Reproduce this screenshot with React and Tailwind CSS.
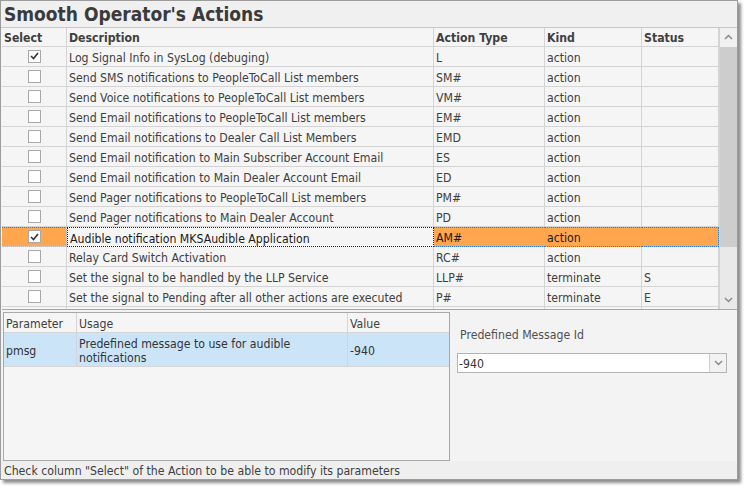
import React from 'react';

const rows = [
  { sel: true, desc: 'Log Signal Info in SysLog (debuging)', type: 'L', kind: 'action', status: '' },
  { sel: false, desc: 'Send SMS notifications to PeopleToCall List members', type: 'SM#', kind: 'action', status: '' },
  { sel: false, desc: 'Send Voice notifications to PeopleToCall List members', type: 'VM#', kind: 'action', status: '' },
  { sel: false, desc: 'Send Email notifications to PeopleToCall List members', type: 'EM#', kind: 'action', status: '' },
  { sel: false, desc: 'Send Email notifications to Dealer Call List Members', type: 'EMD', kind: 'action', status: '' },
  { sel: false, desc: 'Send Email notification to Main Subscriber Account Email', type: 'ES', kind: 'action', status: '' },
  { sel: false, desc: 'Send Email notification to Main Dealer Account Email', type: 'ED', kind: 'action', status: '' },
  { sel: false, desc: 'Send Pager notifications to PeopleToCall List members', type: 'PM#', kind: 'action', status: '' },
  { sel: false, desc: 'Send Pager notifications to Main Dealer Account', type: 'PD', kind: 'action', status: '' },
  { sel: true, desc: 'Audible notification MKSAudible Application', type: 'AM#', kind: 'action', status: '', active: true },
  { sel: false, desc: 'Relay Card Switch Activation', type: 'RC#', kind: 'action', status: '' },
  { sel: false, desc: 'Set the signal to be handled by the LLP Service', type: 'LLP#', kind: 'terminate', status: 'S' },
  { sel: false, desc: 'Set the signal to Pending after all other actions are executed', type: 'P#', kind: 'terminate', status: 'E' },
];

const font = { fontFamily: '"DejaVu Sans Condensed", "DejaVu Sans", Tahoma, sans-serif' };

const CheckBox = ({ checked }) => (
  <div className="w-[13px] h-[13px] border border-[#a8a8a8] bg-white flex items-center justify-center">
    {checked && (
      <svg width="9" height="8" viewBox="0 0 9 8">
        <path d="M1 4 L3.5 6.5 L8 1" fill="none" stroke="#333" strokeWidth="1.6" />
      </svg>
    )}
  </div>
);

const Chevron = ({ up }) => (
  <svg width="9" height="6" viewBox="0 0 9 6">
    <path d={up ? 'M1 5 L4.5 1.5 L8 5' : 'M1 1 L4.5 4.5 L8 1'} fill="none" stroke="#8a8a8a" strokeWidth="1.5" />
  </svg>
);

const cols = 'grid grid-cols-[65px_367px_111px_97px_77px]';

export default function App() {
  return (
    <div className="w-[748px] h-[490px] bg-white text-[12.2px] text-[#404040]" style={font}>
      <div className="w-[738px] h-[480px] border border-[#9c9c9c] bg-[#f3f3f3] shadow-[3px_3px_3px_rgba(0,0,0,0.45)] flex flex-col">
        {/* title */}
        <div className="h-[27px] px-[3px] pt-[2px] flex items-center bg-[#f0f0f0] border-b border-[#c8c8c8] text-[19px] font-bold text-[#3a3a3a] leading-none">
          Smooth Operator's Actions
        </div>

        {/* actions grid */}
        <div className="h-[283px] ml-px flex border-b border-[#a8a8a8] bg-[#f5f5f5] overflow-hidden">
          <div className="w-[717px]">
            <div className={`${cols} h-[19px] font-bold border-b border-[#d4d4d4] leading-[15px]`}>
              {['Select', 'Description', 'Action Type', 'Kind', 'Status'].map((h) => (
                <div key={h} className="pl-[2px] pt-[3px] border-r border-[#d4d4d4]">{h}</div>
              ))}
            </div>
            {rows.map((r) => (
              <div
                key={r.desc}
                className={`${cols} h-[20px] leading-[16px] ${r.active ? 'text-[#1a1a1a]' : ''}`}
              >
                <div className={`flex items-center justify-center border-r border-b border-[#d4d4d4] ${r.active ? 'bg-[#ffa64f] border-t border-t-[#2a7ad0] border-dotted' : ''}`}>
                  <CheckBox checked={r.sel} />
                </div>
                <div className={`pl-[2px] pt-[3px] whitespace-nowrap overflow-hidden ${r.active ? 'border border-dotted border-[#222] pt-[2px]' : 'border-r border-b border-[#d4d4d4]'}`}>
                  {r.desc}
                </div>
                {[r.type, r.kind, r.status].map((v, i) => (
                  <div
                    key={i}
                    className={`pl-[2px] ${r.active ? 'pt-[2px] bg-[#ffa64f] border-y border-dotted border-[#2a7ad0]' : 'pt-[3px] border-r border-b border-[#d4d4d4]'} ${r.active && i === 2 ? 'border-r' : ''}`}
                  >
                    {v}
                  </div>
                ))}
              </div>
            ))}
            <div className={`${cols} h-[4px]`}>
              {[0, 1, 2, 3, 4].map((i) => (
                <div key={i} className="border-r border-[#d4d4d4]" />
              ))}
            </div>
          </div>
          {/* scrollbar */}
          <div className="w-[18px] flex flex-col border-l border-[#d4d4d4] bg-[#e9e9e9]">
            <div className="h-[19px] bg-[#f0f0f0] flex items-center justify-center">
              <Chevron up />
            </div>
            <div className="h-[200px] bg-[#cdcdcd]" />
            <div className="flex-1" />
            <div className="h-[19px] flex items-center justify-center">
              <Chevron />
            </div>
          </div>
        </div>

        {/* parameters */}
        <div className="flex pt-[2px] h-[151px]">
          <div className="ml-[2px] w-[447px] h-[149px] border border-[#a8a8a8] bg-[#f5f5f5]">
            <div className="grid grid-cols-[73px_271px_101px] h-[20px] leading-[16px] border-b border-[#d4d4d4]">
              <div className="pl-[2px] pt-[3px] border-r border-[#d4d4d4]">Parameter</div>
              <div className="pl-[2px] pt-[3px] border-r border-[#d4d4d4]">Usage</div>
              <div className="pl-[2px] pt-[3px]">Value</div>
            </div>
            <div className="grid grid-cols-[73px_271px_101px] h-[34px] bg-[#cce4f7] border-b border-[#d4d4d4] text-[#333]">
              <div className="pl-[2px] pt-[3px] flex items-center border-r border-[#d4d4d4]">pmsg</div>
              <div className="pl-[2px] pt-[4px] leading-[14px] border-r border-[#d4d4d4]">
                Predefined message to use for audible notifications
              </div>
              <div className="pl-[2px] pt-[3px] flex items-center">-940</div>
            </div>
          </div>
          <div className="flex-1 pl-[7px] pt-[13px]">
            <div className="pl-[3px] h-[20px] leading-[20px] text-[#505050]">Predefined Message Id</div>
            <div className="mt-[8px] w-[270px] h-[20px] border border-[#b4b4b4] bg-white flex">
              <div className="flex-1 pl-px pt-[2px] leading-[16px] text-[#333]">-940</div>
              <div className="w-[17px] border-l border-[#d0d0d0] bg-[#f2f2f2] flex items-center justify-center">
                <Chevron />
              </div>
            </div>
          </div>
        </div>

        {/* status */}
        <div className="flex-1 bg-[#efefef] pl-[3px] pt-[2px] leading-[16px] text-[#404040]">
          Check column "Select" of the Action to be able to modify its parameters
        </div>
      </div>
    </div>
  );
}
